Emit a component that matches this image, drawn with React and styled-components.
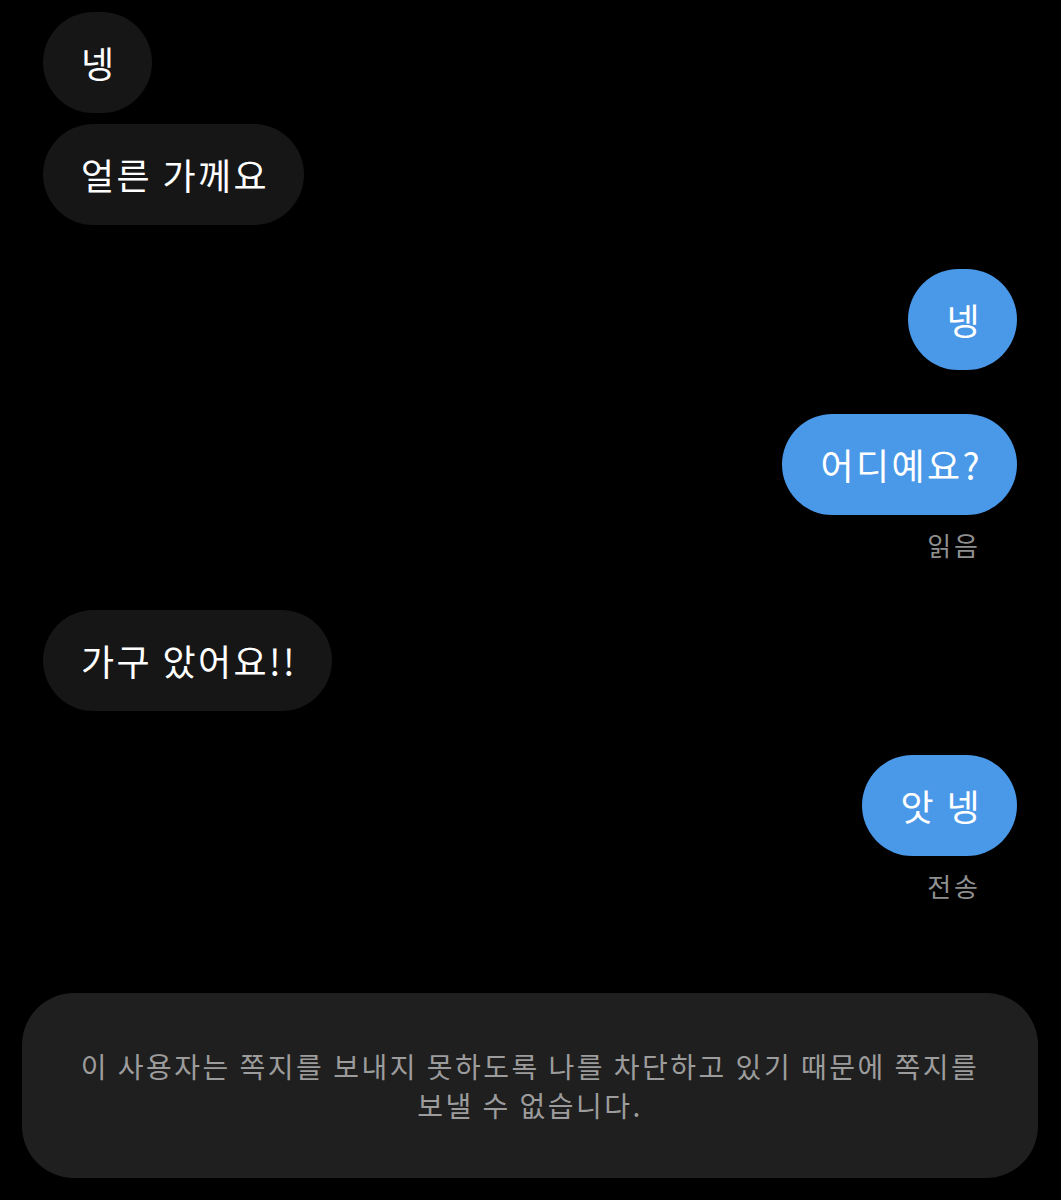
import React from 'react';
import styled, {createGlobalStyle} from 'styled-components';

const GlobalStyle = createGlobalStyle`
  html, body {
    margin: 0;
    padding: 0;
    background: #000;
  }
  body {
    font-family: "Noto Sans CJK KR", "Noto Sans", sans-serif;
    color: #fff;
  }
`;

const Screen = styled.div`
  width: 1061px;
  height: 1200px;
  background: #000;
  display: flex;
  flex-direction: column;
  box-sizing: border-box;
  padding: 12px 0 0;
`;

const Thread = styled.div`
  display: flex;
  flex-direction: column;
  gap: 44px;
  padding: 0 44px 0 43px;
`;

const Group = styled.div`
  display: flex;
  flex-direction: column;
  align-items: ${p => (p.$mine ? 'flex-end' : 'flex-start')};
  gap: 11px;
`;

const Bubble = styled.div`
  background: ${p => (p.$mine ? '#4a98e8' : '#161616')};
  color: #fff;
  font-size: 36px;
  line-height: 50px;
  letter-spacing: 2.4px;
  padding: 25px 35px 26px 38px;
  border-radius: 51px;
  white-space: nowrap;
`;

const Status = styled.div`
  margin-top: 1px;
  padding-right: 36px;
  font-size: 26px;
  line-height: 36px;
  letter-spacing: 3px;
  color: #8f8f8f;
  padding-bottom: 3px;
`;

const Notice = styled.div`
  margin: auto 23px 22px 22px;
  height: 185px;
  box-sizing: border-box;
  background: #1f1f1f;
  border-radius: 52px;
  display: flex;
  align-items: center;
  justify-content: center;
  text-align: center;
  color: #9c9c9c;
  font-size: 28px;
  line-height: 39px;
  letter-spacing: 2.5px;
  padding: 0 20px;
`;

const messages = [
  {mine: false, texts: ['넹', '얼른 가께요']},
  {mine: true, texts: ['넹']},
  {mine: true, texts: ['어디예요?'], status: '읽음'},
  {mine: false, texts: ['가구 았어요!!']},
  {mine: true, texts: ['앗 넹'], status: '전송'},
];

export default function App() {
  return (
    <Screen>
      <GlobalStyle />
      <Thread>
        {messages.map((m, i) => (
          <Group key={i} $mine={m.mine}>
            {m.texts.map((t, j) => (
              <Bubble key={j} $mine={m.mine}>{t}</Bubble>
            ))}
            {m.status && <Status>{m.status}</Status>}
          </Group>
        ))}
      </Thread>
      <Notice>
        이 사용자는 쪽지를 보내지 못하도록 나를 차단하고 있기 때문에 쪽지를
        <br />
        보낼 수 없습니다.
      </Notice>
    </Screen>
  );
}
